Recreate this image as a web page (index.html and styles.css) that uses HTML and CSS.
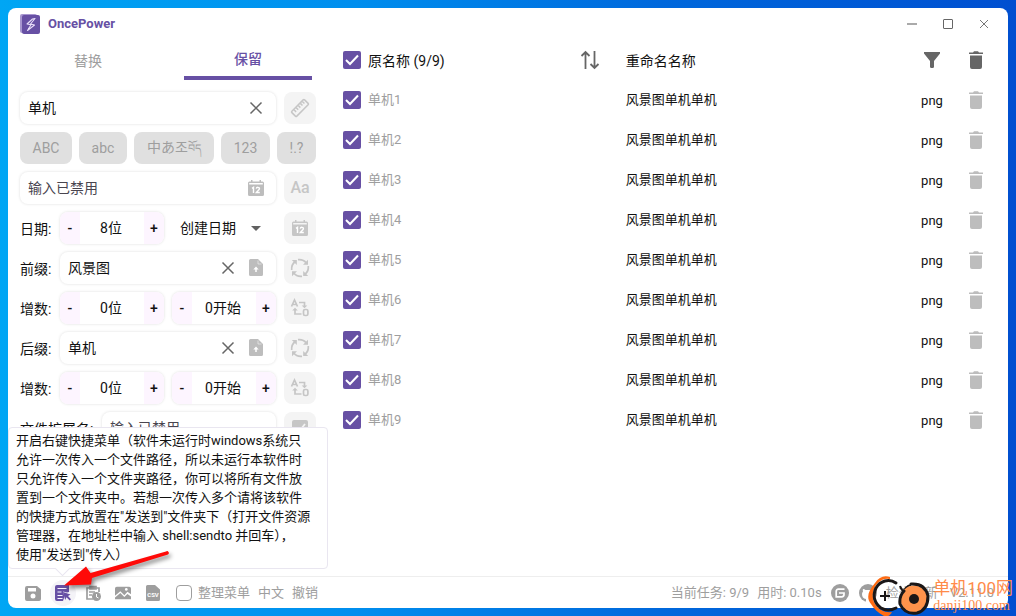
FILE: index.html
```
<!DOCTYPE html>
<html lang="zh-CN">
<head>
<meta charset="utf-8">
<title>OncePower</title>
<link rel="stylesheet" href="styles.css">
</head>
<body>
<svg class="sprite" aria-hidden="true">
  <symbol id="i-close" viewBox="0 0 16 16"><path d="M2.500 2.500l11 11M13.500 2.500l-11 11" fill="none" stroke="currentColor" stroke-width="1.500"/></symbol>
  <symbol id="i-calendar" viewBox="0 0 16 16"><path fill="currentColor" fill-rule="evenodd" d="M3 0h1.500v1.500h7V0H13v1.500h1.500a1.500 1.500 0 0 1 1.500 1.500v11.500a1.500 1.500 0 0 1-1.500 1.500h-13A1.500 1.500 0 0 1 0 14.500V3a1.500 1.500 0 0 1 1.500-1.500H3zM1.200 3v1.500h13.600V3z"/><path d="M4 8.300l1.500-1V13M8.300 8.600c.2-1.800 3.400-1.700 3.100.3-.2 1.200-1.800 2-3 3.600h3.400" fill="none" stroke="#fff" stroke-width="1.400"/></symbol>
  <symbol id="i-upload" viewBox="0 0 16 18"><path fill="currentColor" d="M2.500 0H10l5 5v10.500a1.500 1.500 0 0 1-1.500 1.500h-11A1.500 1.500 0 0 1 1 15.500v-14A1.500 1.500 0 0 1 2.500 0z"/><path d="M10 1.500V5h3.500" fill="none" stroke="#fff" stroke-width=".5"/><path d="M8 13V9" fill="none" stroke="#fff" stroke-width="1.500"/><path d="M5.300 10.500L8 7.600l2.700 2.900z" fill="#fff"/></symbol>
  <symbol id="i-cycle" viewBox="0 0 20 20"><g fill="none" stroke="currentColor" stroke-width="1.700"><path d="M8 1.700Q13.500 1.200 16.300 5"/><path d="M18.300 8Q18.800 13.500 15 16.300"/><path d="M12 18.300Q6.500 18.800 3.700 15"/><path d="M1.700 12Q1.200 6.500 5 3.700"/></g><g fill="currentColor"><path d="M18 1.800v5h-5z"/><path d="M18.200 18h-5v-5z"/><path d="M2 18.200v-5h5z"/><path d="M1.800 2h5v5z"/></g></symbol>
  <symbol id="i-swap" viewBox="0 0 20 20"><g fill="none" stroke="currentColor" stroke-width="1.700"><path d="M1.500 8.500L4.500 2l3 6.500M2.700 6.500h3.600"/><path d="M9 4.500h5.500V9M5 11v5h6.500"/><rect x="13.500" y="11.500" width="4.400" height="6" rx="1.600"/></g><path d="M11.700 7.500h5.600L14.500 10.300zM2.200 12.500h5.600L5 9.700z" fill="currentColor"/></symbol>
  <symbol id="i-trash" viewBox="0 0 14 18"><path fill="currentColor" d="M0 1.500h4L5 .300h4l1 1.200h4V3H0zM1 4.500h12V16a2 2 0 0 1-2 2H3a2 2 0 0 1-2-2z"/></symbol>
</svg>

<main class="window">
  <header class="titlebar">
    <svg class="logo" viewBox="0 0 20 20" aria-hidden="true"><rect width="17" height="19" rx="2" fill="#a796cf"/><rect x="2" y="1" width="18" height="19" rx="2" fill="#6750a4"/><path d="M12.500 5L7 10l4 .8L7.500 16.500l7-5.500-4-1L15 4.500z" fill="none" stroke="#e8def8" stroke-width="1.100" stroke-linejoin="round"/></svg>
    <h1 class="app-name">OncePower</h1>
    <div class="window-actions">
      <button type="button" aria-label="最小化"><svg viewBox="0 0 10 10"><path d="M0 5h10" stroke="#aaa" stroke-width="2"/></svg></button>
      <button type="button" aria-label="最大化"><svg viewBox="0 0 10 10"><rect x=".5" y=".5" width="9" height="9" rx=".5" fill="none" stroke="#666"/></svg></button>
      <button type="button" aria-label="关闭"><svg viewBox="0 0 10 10"><path d="M1 1l8 8M9 1L1 9" stroke="#777" fill="none"/></svg></button>
    </div>
  </header>

  <div class="content">
    <section class="panel">
      <nav class="tabs">
        <button type="button" class="tab">替换</button>
        <button type="button" class="tab tab-active">保留</button>
      </nav>
      <form class="form">
        <div class="row">
          <div class="field">
            <input type="text" value="单机" aria-label="匹配内容">
            <button type="button" class="plain" aria-label="清除"><svg class="icon"><use href="#i-close"/></svg></button>
          </div>
          <button type="button" class="tool" aria-label="长度"><svg class="icon-lg" viewBox="0 0 20 20"><g transform="rotate(-45 10 10)" fill="none" stroke="currentColor" stroke-width="1.500"><rect x="1" y="6.500" width="18" height="7" rx="1"/><path d="M4.500 7v3M7.500 7v3M10.500 7v3M13.500 7v3M16.300 7v3"/></g></svg></button>
        </div>
        <div class="chips">
          <button type="button">ABC</button>
          <button type="button">abc</button>
          <button type="button">中あ조<span class="tibetan">བོད</span></button>
          <button type="button">123</button>
          <button type="button">!.?</button>
        </div>
        <div class="row">
          <div class="field">
            <input type="text" placeholder="输入已禁用" aria-label="新名称" disabled>
            <button type="button" class="plain muted" aria-label="日期"><svg class="icon"><use href="#i-calendar"/></svg></button>
          </div>
          <button type="button" class="tool tool-text">Aa</button>
        </div>
        <div class="row">
          <label class="label" for="date-digits">日期:</label>
          <div class="stepper"><button type="button">-</button><input id="date-digits" type="text" value="8位"><button type="button">+</button></div>
          <select class="select" aria-label="日期类型"><option>创建日期</option><option>修改日期</option></select>
          <button type="button" class="tool" aria-label="使用日期"><svg class="icon"><use href="#i-calendar"/></svg></button>
        </div>
        <div class="row">
          <label class="label" for="prefix">前缀:</label>
          <div class="field">
            <input id="prefix" type="text" value="风景图">
            <button type="button" class="plain" aria-label="清除"><svg class="icon"><use href="#i-close"/></svg></button>
            <button type="button" class="plain muted" aria-label="上传"><svg class="icon-file"><use href="#i-upload"/></svg></button>
          </div>
          <button type="button" class="tool" aria-label="循环前缀"><svg class="icon-lg"><use href="#i-cycle"/></svg></button>
        </div>
        <div class="row">
          <label class="label" for="prefix-digits">增数:</label>
          <div class="stepper"><button type="button">-</button><input id="prefix-digits" type="text" value="0位"><button type="button">+</button></div>
          <div class="stepper"><button type="button">-</button><input type="text" value="0开始" aria-label="前缀起始"><button type="button">+</button></div>
          <button type="button" class="tool" aria-label="交换"><svg class="icon-lg"><use href="#i-swap"/></svg></button>
        </div>
        <div class="row">
          <label class="label" for="suffix">后缀:</label>
          <div class="field">
            <input id="suffix" type="text" value="单机">
            <button type="button" class="plain" aria-label="清除"><svg class="icon"><use href="#i-close"/></svg></button>
            <button type="button" class="plain muted" aria-label="上传"><svg class="icon-file"><use href="#i-upload"/></svg></button>
          </div>
          <button type="button" class="tool" aria-label="循环后缀"><svg class="icon-lg"><use href="#i-cycle"/></svg></button>
        </div>
        <div class="row">
          <label class="label" for="suffix-digits">增数:</label>
          <div class="stepper"><button type="button">-</button><input id="suffix-digits" type="text" value="0位"><button type="button">+</button></div>
          <div class="stepper"><button type="button">-</button><input type="text" value="0开始" aria-label="后缀起始"><button type="button">+</button></div>
          <button type="button" class="tool" aria-label="交换"><svg class="icon-lg"><use href="#i-swap"/></svg></button>
        </div>
        <div class="row">
          <label class="label label-wide" for="ext">文件扩展名:</label>
          <div class="field"><input id="ext" type="text" placeholder="输入已禁用" disabled></div>
          <button type="button" class="tool" aria-label="启用扩展名"><svg class="icon" viewBox="0 0 16 16"><rect width="16" height="16" rx="2" fill="currentColor"/><path d="M3 8l4 3.500L13 4" fill="none" stroke="#f4f4f4" stroke-width="1.800"/></svg></button>
        </div>
      </form>
    </section>

    <section class="files">
      <table class="file-table">
        <colgroup><col class="col-check"><col class="col-name"><col><col class="col-ext"><col class="col-trash"></colgroup>
        <thead>
          <tr>
            <th><input type="checkbox" aria-label="全选" checked></th>
            <th><div class="name-head"><span>原名称 (9/9)</span><button type="button" class="plain" aria-label="排序"><svg class="icon-lg" viewBox="0 0 20 20"><path d="M5.500 19V2M1.500 6l4-4 4 4M14.500 1v17M10.500 14l4 4 4-4" fill="none" stroke="currentColor" stroke-width="1.800"/></svg></button></div></th>
            <th>重命名名称</th>
            <th class="center"><button type="button" class="plain" aria-label="筛选"><svg class="icon" viewBox="0 0 16 16"><path d="M0 0h16v1.500L10 9v6.200l-1 .8H7l-1-.8V9L0 1.500z" fill="currentColor"/></svg></button></th>
            <th class="center"><button type="button" class="plain" aria-label="全部删除"><svg class="icon-trash"><use href="#i-trash"/></svg></button></th>
          </tr>
        </thead>
        <tbody>
          <tr><td><input type="checkbox" id="f1" checked></td><td><label for="f1">单机1</label></td><td>风景图单机单机</td><td class="center">png</td><td class="center"><button type="button" class="plain muted" aria-label="删除"><svg class="icon-trash"><use href="#i-trash"/></svg></button></td></tr>
          <tr><td><input type="checkbox" id="f2" checked></td><td><label for="f2">单机2</label></td><td>风景图单机单机</td><td class="center">png</td><td class="center"><button type="button" class="plain muted" aria-label="删除"><svg class="icon-trash"><use href="#i-trash"/></svg></button></td></tr>
          <tr><td><input type="checkbox" id="f3" checked></td><td><label for="f3">单机3</label></td><td>风景图单机单机</td><td class="center">png</td><td class="center"><button type="button" class="plain muted" aria-label="删除"><svg class="icon-trash"><use href="#i-trash"/></svg></button></td></tr>
          <tr><td><input type="checkbox" id="f4" checked></td><td><label for="f4">单机4</label></td><td>风景图单机单机</td><td class="center">png</td><td class="center"><button type="button" class="plain muted" aria-label="删除"><svg class="icon-trash"><use href="#i-trash"/></svg></button></td></tr>
          <tr><td><input type="checkbox" id="f5" checked></td><td><label for="f5">单机5</label></td><td>风景图单机单机</td><td class="center">png</td><td class="center"><button type="button" class="plain muted" aria-label="删除"><svg class="icon-trash"><use href="#i-trash"/></svg></button></td></tr>
          <tr><td><input type="checkbox" id="f6" checked></td><td><label for="f6">单机6</label></td><td>风景图单机单机</td><td class="center">png</td><td class="center"><button type="button" class="plain muted" aria-label="删除"><svg class="icon-trash"><use href="#i-trash"/></svg></button></td></tr>
          <tr><td><input type="checkbox" id="f7" checked></td><td><label for="f7">单机7</label></td><td>风景图单机单机</td><td class="center">png</td><td class="center"><button type="button" class="plain muted" aria-label="删除"><svg class="icon-trash"><use href="#i-trash"/></svg></button></td></tr>
          <tr><td><input type="checkbox" id="f8" checked></td><td><label for="f8">单机8</label></td><td>风景图单机单机</td><td class="center">png</td><td class="center"><button type="button" class="plain muted" aria-label="删除"><svg class="icon-trash"><use href="#i-trash"/></svg></button></td></tr>
          <tr><td><input type="checkbox" id="f9" checked></td><td><label for="f9">单机9</label></td><td>风景图单机单机</td><td class="center">png</td><td class="center"><button type="button" class="plain muted" aria-label="删除"><svg class="icon-trash"><use href="#i-trash"/></svg></button></td></tr>
        </tbody>
      </table>
    </section>
  </div>

  <footer class="statusbar">
    <div class="status-tools">
      <button type="button" aria-label="保存"><svg viewBox="0 0 16 16"><path fill="currentColor" fill-rule="evenodd" d="M2 1h10l4 3.500V14a2 2 0 0 1-2 2H2a2 2 0 0 1-2-2V3a2 2 0 0 1 2-2zM3 3v3.500h8V3zM8 8.500a2.500 2.500 0 1 0 0 5 2.500 2.500 0 0 0 0-5z"/></svg></button>
      <button type="button" class="active" aria-label="右键快捷菜单"><svg viewBox="0 0 16 16"><path fill="currentColor" d="M2 0h12v7l-2 .500-4-1 1.500 5L8 16H2a2 2 0 0 1-2-2V2a2 2 0 0 1 2-2z"/><path d="M2.500 3.500h9M2.500 7h4M2.500 10.500h5M2.500 13.500h5" stroke="#f8f5ff" stroke-width="1.200"/><path fill="currentColor" d="M8 7l7.500 2.500-2.500 1.500 3 3.200-1.300 1.300-3.200-3.200-1.300 2.700z"/></svg></button>
      <button type="button" aria-label="日志"><svg viewBox="0 0 16 16"><path d="M8 14H2V3h12v4M5 1.500h6V4H5zM4 7h6M4 10h3" fill="none" stroke="currentColor" stroke-width="1.700"/><circle cx="11.500" cy="11.500" r="4.500" fill="currentColor"/><path d="M11.500 9v3l2 1" fill="none" stroke="#fff"/></svg></button>
      <button type="button" aria-label="图片"><svg viewBox="0 0 18 16"><path fill="currentColor" d="M2 1h14a2 2 0 0 1 2 2v6.500l-4-3-3.500 4L6 6l-6 5V3a2 2 0 0 1 2-2zM0 13l6-5 4.500 4.500L14 9l4 3v3H0z"/><circle cx="12.700" cy="4" r="1.500" fill="#fff"/></svg></button>
      <button type="button" aria-label="CSV"><svg viewBox="0 0 16 16"><path fill="currentColor" d="M2.500 0H10l5 4.500V14.500a1.500 1.500 0 0 1-1.500 1.500h-11A1.500 1.500 0 0 1 1 14.500v-13A1.500 1.500 0 0 1 2.500 0z"/><text x="8" y="12" text-anchor="middle" class="csv">CSV</text></svg></button>
    </div>
    <input type="checkbox" id="organize" class="outline-check">
    <label for="organize">整理菜单</label>
    <button type="button" class="text-button">中文</button>
    <button type="button" class="text-button">撤销</button>
    <div class="status-info">
      <span>当前任务: 9/9</span>
      <span>用时: 0.10s</span>
      <a href="#" class="badge-link" aria-label="Gitee"><svg viewBox="0 0 18 18"><circle cx="9" cy="9" r="9" fill="currentColor"/><path d="M13.500 5.200H7.500Q5.200 5.200 5.200 7.500v5.300h5.500q2.300 0 2.300-2.300V9H8" fill="none" stroke="#fff" stroke-width="1.700"/></svg></a>
      <a href="#" class="badge-link" aria-label="GitHub"><svg viewBox="0 0 18 18"><circle cx="9" cy="9" r="9" fill="currentColor"/><path d="M7 18v-3q-4-.500-4-5 0-1.500 1-2.500-.5-1.500 0-2.500 1.500 0 2.500 1h5q1-1 2.500-1 .5 1 0 2.500 1 1 1 2.500 0 4.500-4 5v3z" fill="#fff"/></svg></a>
      <button type="button" class="text-button">检查更新</button>
      <span class="version">V2.11.0</span>
    </div>
  </footer>

  <aside class="tooltip" role="tooltip">开启右键快捷菜单（软件未运行时windows系统只<br>允许一次传入一个文件路径，所以未运行本软件时<br>只允许传入一个文件夹路径，你可以将所有文件放<br>置到一个文件夹中。若想一次传入多个请将该软件<br>的快捷方式放置在"发送到"文件夹下（打开文件资源<br>管理器，在地址栏中输入 shell:sendto 并回车），<br>使用"发送到"传入）</aside>
</main>

<svg class="pointer" viewBox="0 0 120 44" aria-hidden="true"><path d="M110 6.500L34 30l-1 6.500L6 37.500 28 18.500l4.500 6.500L108 3.500a1.600 1.600 0 0 1 2 3z" fill="#ff0a08"/></svg>

<div class="watermark">
  <svg viewBox="0 0 66 44" aria-hidden="true">
    <path d="M23 3C17 1 12 3 8 9 1 17-1 24 4 30c3 5 7 9 13 12 3 1 6 0 8-4-7 1-13-2-17-8C3 21 7 10 15 6q4-2 8-1z" fill="#ff6b12"/>
    <path d="M29 9C22 4 13 7 9 14 5 22 8 30 14 34q7 4 15 0" fill="none" stroke="#1b1717" stroke-width="3" stroke-linecap="round"/>
    <path d="M33 12q1 4 5 6M44 11q-6 1-8 9" fill="none" stroke="#1b1717" stroke-width="2"/>
    <path d="M18 17v10M13 22h10" stroke="#1b1717" stroke-width="2"/>
    <circle cx="47" cy="25" r="13.500" fill="#ff934b"/>
    <path d="M44 10q14-1 17 12 0 14-11 17-12 2-17-9-1-8 4-13" fill="none" stroke="#1b1717" stroke-width="3" stroke-linecap="round"/>
    <circle cx="47" cy="25" r="5" fill="#1b1717"/>
  </svg>
  <div class="watermark-text"><span>单机100网</span><small>danji100.com</small></div>
</div>
</body>
</html>
```
FILE: styles.css
```
* { box-sizing: border-box; }
body {
  margin: 0;
  height: 100vh;
  padding: 8px;
  overflow: hidden;
  position: relative;
  background: linear-gradient(90deg, #00a6f4 0%, #008eee 35%, #0068dc 65%, #004fd0 100%);
  font-family: Roboto, "Noto Sans CJK SC", sans-serif;
  font-size: 14px;
  line-height: 20px;
  color: #111;
}
button, input, select { font: inherit; color: inherit; }
button { border: 0; padding: 0; background: none; }
svg { display: block; }
.sprite { position: absolute; width: 0; height: 0; }

.window {
  position: relative;
  height: 100%;
  display: flex;
  flex-direction: column;
  background: #fff;
  border-radius: 8px;
}
.titlebar {
  display: flex;
  align-items: center;
  gap: 8px;
  height: 32px;
  padding: 0 12px;
}
.logo { width: 20px; height: 20px; }
.app-name { margin: 0; font-size: 13px; font-weight: 700; color: #6750a4; }
.window-actions { display: flex; gap: 12px; margin-left: auto; }
.window-actions button { display: grid; place-items: center; width: 24px; height: 24px; }
.window-actions svg { width: 10px; height: 10px; }

.content { flex: 1; min-height: 0; display: flex; gap: 24px; padding: 0 12px; }
.panel { flex: 0 0 296px; display: flex; flex-direction: column; min-height: 0; }
.tabs { display: flex; gap: 32px; height: 40px; padding: 0 4px; flex: none; }
.tab { flex: 1; padding-top: 2px; color: #9e9e9e; }
.tab-active { color: #6750a4; font-weight: 500; border-bottom: 4px solid #6750a4; }

.form { display: flex; flex-direction: column; gap: 8px; margin: 0 -4px; padding: 12px 4px 0; overflow: hidden; }
.row { display: flex; gap: 8px; height: 32px; flex: none; }
.label { flex: 0 0 32px; padding-top: 1px; line-height: 32px; white-space: nowrap; }
.label-wide { flex-basis: 74px; }
.field {
  flex: 1;
  min-width: 0;
  display: flex;
  align-items: center;
  gap: 12px;
  padding: 0 12px 0 8px;
  border-radius: 8px;
  box-shadow: 0 0 3px #ddd;
}
.field input { flex: 1; min-width: 0; width: 0; border: 0; padding: 0; background: none; outline: 0; }
.field input::placeholder { color: #49454f; opacity: 1; }
.plain { display: inline-grid; place-items: center; color: #666; vertical-align: middle; }
.plain.muted { color: #bdbdbd; }
.icon { width: 16px; height: 16px; }
.icon-lg { width: 20px; height: 20px; }
.icon-file { width: 16px; height: 18px; }
.icon-trash { width: 14px; height: 18px; }
.tool {
  flex: 0 0 32px;
  display: grid;
  place-items: center;
  border-radius: 8px;
  background: #f4f4f4;
  color: #c6c6c6;
}
.tool-text { font-size: 16px; font-weight: 500; }
.chips { display: grid; grid-template-columns: 52fr 48fr 80fr 49fr 39fr; gap: 7px; height: 32px; flex: none; }
.chips button { border-radius: 8px; background: #e0e0e0; color: #9e9e9e; white-space: nowrap; }
.tibetan { font-size: 11px; }
.stepper {
  flex: 1 1 0;
  min-width: 0;
  display: flex;
  border-radius: 8px;
  overflow: hidden;
  box-shadow: 0 0 3px #ddd;
}
.stepper button { flex: 0 0 20px; background: #fdf5ff; font-weight: 500; }
.stepper input { flex: 1; width: 0; min-width: 0; border: 0; padding: 0 2px 0 0; text-align: center; background: none; }
.select {
  flex: 1 1 0;
  width: 0;
  min-width: 0;
  appearance: none;
  border: 0;
  margin: 0;
  padding: 0;
  text-indent: 8px;
  background: url("data:image/svg+xml,%3Csvg xmlns='http://www.w3.org/2000/svg' viewBox='0 0 10 5'%3E%3Cpath d='M0 0h10L5 5z' fill='%23616161'/%3E%3C/svg%3E") no-repeat right 15px center / 10px 5px;
}

input[type="checkbox"] {
  display: block;
  appearance: none;
  width: 18px;
  height: 18px;
  margin: 0 3px;
  border-radius: 2px;
}
input[type="checkbox"]:checked {
  background: #6750a4 url("data:image/svg+xml,%3Csvg xmlns='http://www.w3.org/2000/svg' viewBox='0 0 18 18'%3E%3Cpath d='M3 9l4 4 8-8.500' fill='none' stroke='white' stroke-width='2'/%3E%3C/svg%3E");
}

.files { flex: 1; min-width: 0; }
.file-table { width: 100%; table-layout: fixed; border-collapse: collapse; }
.col-check { width: 28px; }
.col-name { width: 39%; }
.col-ext { width: 48px; }
.col-trash { width: 40px; }
.file-table th, .file-table td { height: 40px; padding: 0; text-align: left; font-weight: 400; }
.file-table th:nth-child(3) { padding: 2px 0 0 2px; }
.file-table td:nth-child(3) { padding-left: 2px; }
.file-table td { font-size: 13px; }
.file-table td:nth-child(4) { padding-top: 2px; }
.file-table .plain { display: grid; margin: 0 auto; }
.file-table td label { color: #9e9e9e; }
.file-table .center { text-align: center; }
.name-head { display: flex; align-items: center; justify-content: space-between; padding-right: 24px; }
.name-head span { padding-top: 2px; }
.file-table .name-head .plain { margin: 0; }

.statusbar {
  flex: none;
  display: flex;
  align-items: center;
  gap: 8px;
  height: 32px;
  padding: 0 12px;
  border-top: 1px solid #eee;
  font-size: 13px;
  color: #9e9e9e;
}
.status-tools { display: flex; gap: 4px; }
.status-tools button { display: grid; place-items: center; width: 26px; height: 26px; border-radius: 50%; }
.status-tools .active { color: #6750a4; background: #f4f3f7; }
.status-tools svg { width: 16px; height: 16px; }
.csv { font-size: 6px; font-weight: 700; fill: #fff; }
.statusbar .outline-check { width: 16px; height: 16px; margin: 0 -2px 0 2px; border: 1px solid #9e9e9e; border-radius: 4px; }
.status-info { display: flex; align-items: center; gap: 8px; margin-left: auto; }
.badge-link { color: #9e9e9e; margin: 0 1px; }
.badge-link svg { width: 18px; height: 18px; }
.version { padding: 0 2px 0 4px; }

.tooltip {
  position: absolute;
  left: 0;
  bottom: 39px;
  width: 320px;
  padding: 3px 7px 4px;
  border: 1px solid #e9e6f0;
  border-radius: 4px;
  background: #fff;
  font-size: 13px;
  line-height: 19px;
  white-space: nowrap;
}
.tooltip::after {
  content: "";
  position: absolute;
  left: 48px;
  bottom: -6px;
  width: 10px;
  height: 10px;
  background: #fff;
  border: solid #e9e6f0;
  border-width: 0 1px 1px 0;
  transform: rotate(45deg);
}
.pointer {
  position: absolute;
  left: 58px;
  top: 548px;
  width: 120px;
  height: 44px;
  filter: drop-shadow(2px 3px 2px #0007);
}
.watermark { position: absolute; right: 3px; bottom: -2px; display: flex; align-items: center; }
.watermark svg { width: 66px; height: 44px; }
.watermark-text { display: flex; flex-direction: column; color: #ff8b4a; font-size: 17px; line-height: 20px; }
.watermark-text small { font-family: "Liberation Serif", serif; font-size: 14px; line-height: 16px; }
```
